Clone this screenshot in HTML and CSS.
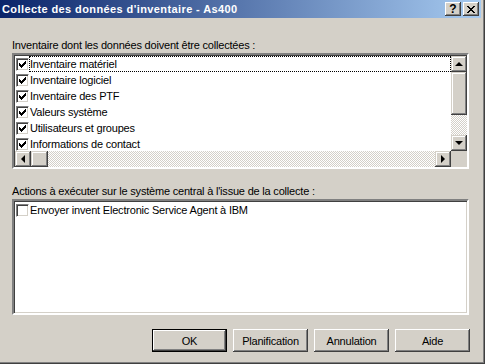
FILE: index.html
```html
<!DOCTYPE html>
<html lang="fr">
<head>
    <meta charset="UTF-8">
    <title>Collecte des données d'inventaire - As400</title>
    <link rel="stylesheet" href="styles.css">
</head>
<body>
    <div class="window">
        <div class="titlebar">
            <span class="title">Collecte des données d'inventaire - As400</span>
            <span class="title-btn help">?</span>
            <span class="title-btn close">
                <svg width="8" height="7" viewBox="0 0 8 7" shape-rendering="crispEdges">
                    <path d="M0 0h2v1h-2zM6 0h2v1h-2zM1 1h2v1h-2zM5 1h2v1h-2zM2 2h4v1h-4zM3 3h2v1h-2zM2 4h4v1h-4zM1 5h2v1h-2zM5 5h2v1h-2zM0 6h2v1h-2zM6 6h2v1h-2z" fill="#000"/>
                </svg>
            </span>
        </div>

        <div class="content">
            <div class="label first">Inventaire dont les données doivent être collectées :</div>
            <div class="listbox">
                <div class="list-area">
                    <div class="item focus"><span class="check on"></span><span class="text">Inventaire matériel</span></div>
                    <div class="item"><span class="check on"></span><span class="text">Inventaire logiciel</span></div>
                    <div class="item"><span class="check on"></span><span class="text">Inventaire des PTF</span></div>
                    <div class="item"><span class="check on"></span><span class="text">Valeurs système</span></div>
                    <div class="item"><span class="check on"></span><span class="text">Utilisateurs et groupes</span></div>
                    <div class="item"><span class="check on"></span><span class="text">Informations de contact</span></div>
                </div>
                <div class="vscroll">
                    <span class="sb-btn"><span class="arrow up"></span></span>
                    <span class="sb-thumb v"></span>
                    <span class="sb-track"></span>
                    <span class="sb-btn"><span class="arrow down"></span></span>
                </div>
                <div class="hscroll">
                    <span class="sb-btn"><span class="arrow left"></span></span>
                    <span class="sb-thumb h"></span>
                    <span class="sb-track"></span>
                    <span class="sb-btn"><span class="arrow right"></span></span>
                </div>
                <div class="corner"></div>
            </div>

            <div class="label second">Actions à exécuter sur le système central à l'issue de la collecte :</div>
            <div class="listbox plain">
                <div class="item"><span class="check"></span><span class="text">Envoyer invent Electronic Service Agent à IBM</span></div>
            </div>

            <div class="buttons">
                <button class="btn default">OK</button>
                <button class="btn">Planification</button>
                <button class="btn">Annulation</button>
                <button class="btn">Aide</button>
            </div>
        </div>
    </div>
</body>
</html>
```

FILE: styles.css
```css
body {
    margin: 0;
    font-family: "Liberation Sans", Arial, sans-serif;
    font-size: 11px;
    letter-spacing: -0.2px;
    color: #000;
}
.window {
    width: 485px;
    height: 364px;
    box-sizing: border-box;
    background-color: #d4d0c8;
    border-right: 1px solid #404040;
    border-bottom: 1px solid #404040;
    box-shadow: inset -1px -1px #808080;
    display: flex;
    flex-direction: column;
}
.titlebar {
    height: 18px;
    margin-right: 3px;
    padding-left: 2px;
    background: linear-gradient(to right, #0a246a, #a6caf0);
    display: flex;
    align-items: center;
}
.title {
    flex: 1;
    color: #fff;
    font-weight: bold;
    font-size: 11px;
    letter-spacing: 0.4px;
}
.title-btn {
    width: 16px;
    height: 14px;
    box-sizing: border-box;
    background-color: #d4d0c8;
    box-shadow: inset -1px -1px #404040, inset 1px 1px #fff, inset -2px -2px #808080;
    display: flex;
    align-items: center;
    justify-content: center;
    font-weight: bold;
    font-size: 12px;
    letter-spacing: 0;
}
.title-btn.help {
    margin-right: 2px;
}
.title-btn.close {
    margin-right: 2px;
}
.content {
    padding: 0 15px 0 12px;
    display: flex;
    flex-direction: column;
}
.label {
    height: 14px;
    line-height: 14px;
}
.label.first {
    margin-top: 20px;
    margin-bottom: 1px;
}
.label.second {
    margin-top: 15px;
    margin-bottom: 1px;
}
.listbox {
    height: 116px;
    box-sizing: border-box;
    background-color: #fff;
    border: 2px solid;
    border-color: #808080 #fff #fff #808080;
    box-shadow: inset 1px 1px #404040, inset -1px -1px #d4d0c8;
    padding: 1px 0 0 1px;
    display: grid;
    grid-template-columns: 1fr 16px;
    grid-template-rows: 95px 16px;
}
.listbox.plain {
    display: block;
    padding: 1px 1px 0 1px;
}
.item {
    height: 16px;
    display: flex;
    align-items: center;
    white-space: nowrap;
}
.item .text {
    flex: 1;
    height: 16px;
    line-height: 16px;
    padding-left: 1px;
    box-sizing: border-box;
}
.item.focus .text {
    outline: 1px dotted #000;
    outline-offset: -1px;
}
.check {
    width: 13px;
    height: 13px;
    box-sizing: border-box;
    background-color: #fff;
    border: 1px solid;
    border-color: #808080 #fff #fff #808080;
    box-shadow: inset 1px 1px #404040, inset -1px -1px #d4d0c8;
    margin-left: 1px;
    flex-shrink: 0;
}
.check.on {
    background: #fff url("data:image/svg+xml,%3Csvg xmlns='http://www.w3.org/2000/svg' width='11' height='11' shape-rendering='crispEdges'%3E%3Cpath d='M2 4h1v3h-1zM3 5h1v3h-1zM4 6h1v3h-1zM5 5h1v3h-1zM6 4h1v3h-1zM7 3h1v3h-1zM8 2h1v3h-1z' fill='%23000'/%3E%3C/svg%3E") no-repeat 0 0;
}
.vscroll {
    display: flex;
    flex-direction: column;
}
.hscroll {
    display: flex;
}
.sb-btn {
    width: 16px;
    height: 16px;
    box-sizing: border-box;
    background-color: #d4d0c8;
    box-shadow: inset -1px -1px #404040, inset 1px 1px #d4d0c8, inset -2px -2px #808080, inset 2px 2px #fff;
    display: flex;
    align-items: center;
    justify-content: center;
    flex-shrink: 0;
}
.sb-thumb {
    background-color: #d4d0c8;
    box-shadow: inset -1px -1px #404040, inset 1px 1px #d4d0c8, inset -2px -2px #808080, inset 2px 2px #fff;
    flex-shrink: 0;
}
.sb-thumb.v {
    width: 16px;
    height: 43px;
}
.sb-thumb.h {
    width: 17px;
    height: 16px;
}
.sb-track {
    flex: 1;
    background: repeating-conic-gradient(#d4d0c8 0 25%, #fff 0 50%) 0 0 / 2px 2px;
}
.corner {
    background-color: #d4d0c8;
}
.arrow {
    width: 0;
    height: 0;
    border: 4px solid transparent;
}
.arrow.up {
    border-bottom-color: #000;
    border-top-width: 0;
    margin-top: -1px;
}
.arrow.down {
    border-top-color: #000;
    border-bottom-width: 0;
}
.arrow.left {
    border-right-color: #000;
    border-left-width: 0;
    margin-left: -1px;
}
.arrow.right {
    border-left-color: #000;
    border-right-width: 0;
}
.buttons {
    margin-top: 14px;
    margin-right: -1px;
    display: flex;
    justify-content: flex-end;
    gap: 6px;
}
.btn {
    width: 75px;
    height: 23px;
    box-sizing: border-box;
    font-family: "Liberation Sans", Arial, sans-serif;
    font-size: 11px;
    letter-spacing: -0.2px;
    color: #000;
    background-color: #d4d0c8;
    border: none;
    padding: 0;
    box-shadow: inset -1px -1px #404040, inset 1px 1px #fff, inset -2px -2px #808080, inset 2px 2px #d4d0c8;
}
.btn.default {
    border: 1px solid #000;
}
```
